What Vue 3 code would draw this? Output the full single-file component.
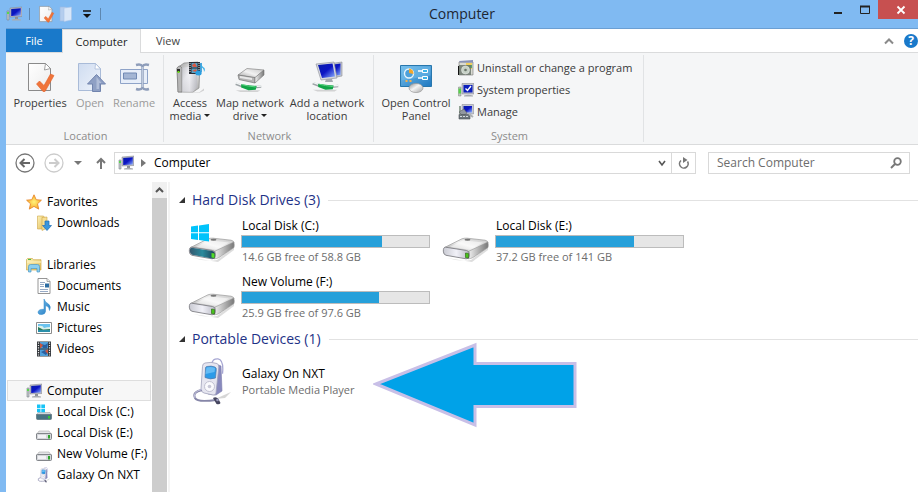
<template>
  <svg class="sprites" aria-hidden="true">
    <defs>
      <linearGradient id="g-screen" x1="0" y1="0" x2="1" y2="1">
        <stop offset="0" stop-color="#0a1ea8" />
        <stop offset="0.5" stop-color="#0b14c4" />
        <stop offset="1" stop-color="#8fb4ff" />
      </linearGradient>
      <linearGradient id="g-metal" x1="0" y1="0" x2="1" y2="1">
        <stop offset="0" stop-color="#8e8e8e" />
        <stop offset="0.45" stop-color="#f4f4f4" />
        <stop offset="1" stop-color="#a4a4a4" />
      </linearGradient>
      <linearGradient id="g-side" x1="0" y1="0" x2="1" y2="0">
        <stop offset="0" stop-color="#f2f2f2" />
        <stop offset="1" stop-color="#777" />
      </linearGradient>
      <linearGradient id="g-top" x1="0" y1="1" x2="1" y2="0">
        <stop offset="0" stop-color="#9c9c9c" />
        <stop offset="0.5" stop-color="#f2f2f2" />
        <stop offset="1" stop-color="#c4c4c4" />
      </linearGradient>
      <linearGradient id="g-face" x1="0" y1="0" x2="1" y2="0">
        <stop offset="0" stop-color="#c9cad2" />
        <stop offset="0.5" stop-color="#f1f1f8" />
        <stop offset="1" stop-color="#b9bac4" />
      </linearGradient>
      <linearGradient id="g-teal" x1="0" y1="0" x2="1" y2="0">
        <stop offset="0" stop-color="#34586e" />
        <stop offset="0.5" stop-color="#2a8a9c" />
        <stop offset="1" stop-color="#1f4258" />
      </linearGradient>
      <linearGradient id="g-folder" x1="0" y1="0" x2="1" y2="1">
        <stop offset="0" stop-color="#fdf3b8" />
        <stop offset="1" stop-color="#e2bb58" />
      </linearGradient>
      <linearGradient id="g-blue" x1="0" y1="0" x2="1" y2="1">
        <stop offset="0" stop-color="#7cc3ee" />
        <stop offset="1" stop-color="#1f78c0" />
      </linearGradient>
      <linearGradient id="g-page" x1="0" y1="0" x2="1" y2="1">
        <stop offset="0" stop-color="#ffffff" />
        <stop offset="1" stop-color="#ececec" />
      </linearGradient>
      <linearGradient id="g-fade" x1="0" y1="0" x2="1" y2="1">
        <stop offset="0" stop-color="#cfdcf0" />
        <stop offset="1" stop-color="#eef3fb" />
      </linearGradient>
      <radialGradient id="g-star">
        <stop offset="0" stop-color="#fff27a" />
        <stop offset="1" stop-color="#f8ae2c" />
      </radialGradient>
    </defs>

    <symbol id="computer" viewBox="0 0 16 16">
      <path d="M1 5h2v9H1z" fill="#c3c8cc" stroke="#7d858c" stroke-width=".6" />
      <path d="M1 6h2v2H1z" fill="#56d94b" />
      <path d="M4 2l12-1v9.500L4 11z" fill="#b8bbc4" stroke="#80828c" stroke-width=".5" />
      <path d="M5.200 3l9.600-.8v7.300L5.200 10z" fill="url(#g-screen)" />
      <path d="M9 11h3v2H9z" fill="#8a8f96" />
      <path d="M6 13.500q4.500-1.500 9 0v1H6z" fill="#a8acb0" />
    </symbol>

    <symbol id="page" viewBox="0 0 32 32">
      <path d="M4.500 2.500h17l5 5v22h-22z" fill="url(#g-page)" stroke="#8a8a8a" />
      <path d="M21.500 2.500l-1 6.500 6-1.500z" fill="#fff" stroke="#8a8a8a" stroke-width=".8" />
      <path d="M12.500 23l3-3 4.500 4.500L26.500 13l3.500 1.500L21 30.500h-2z" fill="#f0743a" stroke="#e05f28" stroke-width=".6" />
    </symbol>

    <symbol id="open" viewBox="0 0 32 32">
      <path d="M4.500 2.500h17l5 5v22h-22z" fill="url(#g-fade)" stroke="#a9bbd8" />
      <path d="M21.500 2.500l-.500 5.500h5.500z" fill="#fff" stroke="#a9bbd8" stroke-width=".8" />
      <path d="M22.500 13.500l9 9.500h-5v7.500h-8V23h-5z" fill="#8fa0c4" stroke="#7184ae" />
      <path d="M22.500 16l5 6h-2.500v6h-2.500z" fill="#b0bdd8" />
    </symbol>

    <symbol id="rename" viewBox="0 0 32 32">
      <path d="M2.500 8.500h27v14h-27z" fill="#e7eef9" stroke="#8ea3c8" />
      <path d="M5.500 12h13v6h-13z" fill="#a3b5d4" stroke="#7189b3" />
      <path d="M18 4q5-1.500 6.500 1.500Q26 2.500 31 4M24.500 5v22M18 28q5 1.500 6.500-1.500Q26 29.500 31 28" fill="none" stroke="#8e9dba" stroke-width="2.400" />
      <path d="M24.500 6v20" stroke="#bdc9de" stroke-width="1" />
    </symbol>

    <symbol id="media" viewBox="0 0 32 32">
      <path d="M3 31l22 .5 5-4v2l-5 2.500z" fill="#999" opacity=".4" />
      <path d="M3 7L10 2l14-1 2 2-1 24-6 4H4z" fill="url(#g-metal)" stroke="#888" stroke-width=".7" />
      <path d="M3 7q1-2 3-2l2 2v24H4z" fill="#b6b6b6" stroke="#737373" stroke-width=".6" />
      <path d="M8 7l15-3v22l-4 5H8z" fill="url(#g-face)" opacity=".6" />
      <path d="M3 8h3v3H3z" fill="#2e2e2e" />
      <path d="M3.500 10h2v2h-2z" fill="#6adf18" />
      <path d="M15 1h11v12H15z" fill="#292d34" />
      <path d="M17.500 2h6v4.500h-6zM17.500 7.500h6V12h-6z" fill="#58a2c5" />
      <path d="M18 4l3-2 2 4h-4zM18 10l4-2 1 3z" fill="#d95842" />
      <path d="M16 2v10M25 2v10" stroke="#ddd" stroke-dasharray="1 1" />
      <path d="M27 2v9" stroke="#138bd3" stroke-width="1.500" />
      <path d="M27 1q0 4 3.500 6 1 2-.5 4 0-4-3-5" fill="#36afe8" />
      <ellipse cx="24.500" cy="12" rx="3.200" ry="2.500" fill="#2b9ee0" />
    </symbol>

    <symbol id="cable" viewBox="0 0 32 12">
      <path d="M2 10h27l-3 2H7z" fill="#bbb" opacity=".6" />
      <path d="M2 3l8 3M20 7l10-1" stroke="#9da4a7" stroke-width="3" />
      <path d="M2 2l6 2.200M21 6l9-.5" stroke="#f1f5f5" stroke-width="1.500" />
      <path d="M8 3.500l8 1 9 1-1 4-8 .5-8-3z" fill="#11a447" />
      <path d="M9 4l7 1.500 8 1" stroke="#65e08b" />
    </symbol>

    <symbol id="mapdrive" viewBox="0 0 32 32">
      <path d="M4 14L13 7.500l17 1.500-9 8z" fill="url(#g-top)" stroke="#888" stroke-width=".7" />
      <path d="M4 14l17 2.500V22L5 18.500z" fill="#b5b5b5" stroke="#777" stroke-width=".7" />
      <path d="M6 15l12 2v2L6 17z" fill="#e8e8e8" />
      <path d="M21 16.500L30 9v5l-9 8z" fill="url(#g-side)" stroke="#777" stroke-width=".6" />
      <use href="#cable" x="0" y="20" width="29" height="11" />
    </symbol>

    <symbol id="addnet" viewBox="0 0 32 32">
      <path d="M17 3l14-2v14l-11 2z" fill="#c2c5ce" stroke="#8a8d97" stroke-width=".6" />
      <path d="M19 4l10.500-1.500V14L19 15z" fill="url(#g-screen)" />
      <path d="M5 3l18-2 3 16-16 2z" fill="#d5d7de" stroke="#8a8d97" stroke-width=".6" />
      <path d="M7 4l14.500-1.500L24 15.500 11 17z" fill="url(#g-screen)" />
      <path d="M15 18h6l1 3h-8z" fill="#a5a9b0" />
      <use href="#cable" x="0" y="19" width="29" height="12" />
    </symbol>

    <symbol id="panel" viewBox="0 0 32 32">
      <path d="M.5 4.500h31v21H.5z" fill="url(#g-blue)" stroke="#2877ad" />
      <path d="M1.500 5.500h29v9l-29 5z" fill="#72bdeb" opacity=".5" />
      <circle cx="9" cy="12.500" r="4.500" fill="#4da0da" stroke="#e6f3fb" stroke-width="1.400" />
      <path d="M9 12V7.500a5 5 0 0 1 4.500 5.500z" fill="#f6a72a" />
      <path d="M18 10h4M18 17h4" stroke="#fff" stroke-width="1.500" />
      <path d="M22.500 8.500h5v3h-5zM22.500 15.500h5v3h-5z" fill="#3bb3e9" stroke="#fff" />
      <path d="M5.500 20h2" stroke="#f8b048" stroke-width="2" />
      <path d="M9.500 20h2" stroke="#f8b048" stroke-width="2" />
      <ellipse cx="16" cy="27" rx="7" ry="4.600" fill="url(#g-metal)" stroke="#999" stroke-width=".7" />
    </symbol>

    <symbol id="uninstall" viewBox="0 0 16 16">
      <path d="M1 2h14v13H1z" fill="#d9dad2" stroke="#777" stroke-width=".6" />
      <path d="M1 1l14-1v2.500H2z" fill="#8992b8" />
      <path d="M8 3h6v6H8z" fill="#f0cf5d" />
      <path d="M9 5h5v3H9z" fill="#58a56b" />
      <path d="M1 5h12v10H1z" fill="#6c776d" opacity=".85" />
      <circle cx="7.500" cy="10" r="4" fill="#c6d1c6" stroke="#eee" stroke-width=".5" />
      <circle cx="7.500" cy="10" r="1.300" fill="#6a746a" />
      <path d="M.5 6v9" stroke="#111" />
    </symbol>

    <symbol id="sysprops" viewBox="0 0 16 16">
      <path d="M.5 5h2.500v9H.5z" fill="#bfc7bd" stroke="#7d857c" stroke-width=".5" />
      <path d="M.5 6.500h2.500v5H.5z" fill="#56d34a" />
      <path d="M4 1.500h12V12H4z" fill="#bfc1cb" stroke="#80828c" stroke-width=".5" />
      <path d="M5.500 3h9v7.500h-9z" fill="#0b1fbd" />
      <path d="M7.500 6.500l2 2L13 4" fill="none" stroke="#fff" stroke-width="1.400" />
      <path d="M6 13.500q4-1.500 9 0v1H6z" fill="#a8acb0" />
    </symbol>

    <symbol id="manage" viewBox="0 0 16 16">
      <path d="M1 2h2v8H1z" fill="#93a396" />
      <path d="M4 .5h11.500v9.500H4z" fill="#c5c8d2" stroke="#80828c" stroke-width=".5" />
      <path d="M5.500 2H14v6.500H5.500z" fill="url(#g-screen)" />
      <path d="M1 8l5-3 3 4-4 3z" fill="#9298a0" stroke="#555" stroke-width=".5" />
      <path d="M1 10.500h11v4.500H1z" fill="#6d757c" stroke="#4a5056" stroke-width=".6" />
      <path d="M2 12.500h9" stroke="#d7dcde" stroke-dasharray="2 1" />
      <path d="M11 10l4 3" stroke="#aeb2b5" stroke-width="2" />
    </symbol>

    <symbol id="star" viewBox="0 0 16 16">
      <path d="M8 .8l2.200 4.900 5.200.5-3.900 3.600 1.200 5.300L8 12.400l-4.700 2.700 1.200-5.300L.6 6.200l5.200-.5z" fill="url(#g-star)" stroke="#e8892e" stroke-width=".9" />
    </symbol>

    <symbol id="downloads" viewBox="0 0 16 16">
      <path d="M1.500 1h6l1 1.500V14h-7z" fill="url(#g-folder)" stroke="#cfa546" stroke-width=".6" />
      <path d="M6 2.500l5-.5v11l-5 2.500z" fill="#f7de92" stroke="#cfa546" stroke-width=".6" />
      <path d="M9 6h4v4.500h2.500L11 15.500 6.500 10.500H9z" fill="#3a96dc" stroke="#1f6db1" stroke-width=".7" />
    </symbol>

    <symbol id="libraries" viewBox="0 0 16 16">
      <path d="M.5 2.500l1-1h5l1 1.200H15V13H.5z" fill="url(#g-folder)" stroke="#cfac4f" stroke-width=".7" />
      <path d="M2 2.500h3" stroke="#4fbd48" />
      <path d="M1 5h14" stroke="#fff5c4" />
      <path d="M2.500 15V9.500q0-2 2-2h7q2 0 2 2V15H11v-3.500H5V15z" fill="#8ccff0" stroke="#4c98c5" stroke-width=".7" />
    </symbol>

    <symbol id="documents" viewBox="0 0 16 16">
      <path d="M2 .5h9l3 3v12H2z" fill="#fff" stroke="#8a8a8a" stroke-width=".9" />
      <path d="M11 .5v3h3" fill="#eee" stroke="#8a8a8a" stroke-width=".7" />
      <path d="M4 4.500h5M4 6.500h4M4 8.500h4M4 11.500h8M4 13.500h8" stroke="#8aa0c0" stroke-width=".9" />
      <path d="M9 5.500h4v4H9z" fill="#2d6da3" />
    </symbol>

    <symbol id="music" viewBox="0 0 16 16">
      <path d="M8 0q1 3.500 4.500 5 3 2.500 1 6.500 0-4-4-5v6.200q-.5 2.500-3.500 2.800Q2 15.800 2 13.200 2.500 10 8 10.300z" fill="url(#g-blue)" stroke="#2b86c8" stroke-width=".5" />
    </symbol>

    <symbol id="pictures" viewBox="0 0 16 16">
      <path d="M.5 2.500h15v11H.5z" fill="#fff" stroke="#8c8c8c" />
      <path d="M2 4h12v4H2z" fill="#6bc3ee" />
      <path d="M2 6q5-1 6 2 3-1 6-1v2H2z" fill="#d9f0ea" />
      <path d="M2 7l5 2.500 7-.5v1.500H2z" fill="#2c7a5a" />
      <path d="M2 10h12v2H2z" fill="#2a8fa9" />
    </symbol>

    <symbol id="videos" viewBox="0 0 16 16">
      <path d="M1 .5h14v15H1z" fill="#34383d" />
      <path d="M4 1h8v6.500H4zM4 8.500h8V15H4z" fill="#4f9fda" />
      <path d="M5 3l4 1 3-2-1 5H7zM5 11l4-2 3 2-2 3z" fill="#2a5fa0" />
      <path d="M4 2l3 2-2 3H4zM9 10l3-2v5z" fill="#c9573f" />
      <path d="M2.500 1.500v13M13.500 1.500v13" stroke="#e8e8e8" stroke-width="1.200" stroke-dasharray="1.200 1.200" />
    </symbol>

    <symbol id="disk" viewBox="0 0 16 16">
      <path d="M3 6h10l2.500 3.500H.5z" fill="#e4e5e8" stroke="#999" stroke-width=".5" />
      <path d="M.5 9q0-.5 1-.5h13q1 0 1 .5v4.500q0 1-1 1h-13q-1 0-1-1z" fill="#d4d6da" stroke="#777b80" stroke-width=".9" />
      <path d="M2 10h8v3H2z" fill="#f2f2f5" />
      <path d="M12 10h2v3.500h-2z" fill="#2da32b" />
    </symbol>

    <symbol id="sysdisk" viewBox="0 0 16 16">
      <path d="M2 8.500h12l1.500 2.500H.5z" fill="#d2d6da" stroke="#999" stroke-width=".5" />
      <path d="M.5 10.500h15v4q0 1-1 1h-13q-1 0-1-1z" fill="#497281" stroke="#627781" stroke-width=".8" />
      <path d="M12 12h2v2.500h-2z" fill="#34c832" />
      <path d="M1 .5h3.500V4H1zM5.300.500H9V4H5.300zM1 4.800h3.500v3.500H1zM5.300 4.800H9v3.500H5.300z" fill="#17c4f7" />
    </symbol>

    <symbol id="player" viewBox="0 0 48 48">
      <path d="M27 41l16-7-6 6z" fill="#bbb" opacity=".6" />
      <path d="M24 6Q24 .5 30 .8q6 1 4.500 15" fill="none" stroke="#a6a6d2" stroke-width="1.300" />
      <path d="M28 6l5 2 1 25-6 4-8-1z" fill="#8889bd" stroke="#7a7bab" stroke-width=".6" />
      <path d="M17 5q6-1.500 12 .5 2 1 1.800 3.500L28 35q0 2.500-3 2l-9-2q-3-1-3-4l1.500-22.500q0-3 2.500-3.500z" fill="#e6e6f0" stroke="#a0a1ba" stroke-width=".8" />
      <path d="M18.500 8.500q5-1 8.500 .5 1.500.7 1.300 2.500L27.500 20q-5 2-10.500-.5l.5-9.500q0-1 1-1.500z" fill="#2c9be8" stroke="#5479a8" stroke-width=".7" />
      <path d="M18.500 9.500q5-1 8.500 .5l-.5 4-9 2z" fill="#7cc9fa" opacity=".7" />
      <circle cx="21.500" cy="28.500" r="5" fill="#fafafd" stroke="#b5b5c8" stroke-width=".8" />
      <circle cx="21.500" cy="28.500" r="1.800" fill="#c7c7d6" />
      <path d="M14 32Q4 34 7 40q2 4.500 21 2" fill="none" stroke="#8686a8" stroke-width="2" />
      <path d="M14 31.500Q4.500 33.500 7 40" fill="none" stroke="#c4c4df" />
      <path d="M25 40q3-2 5.500 1l2 4q-1 2-4 1z" fill="#46465f" />
      <circle cx="29.500" cy="42" r="1.300" fill="#9c9cbc" />
    </symbol>

    <symbol id="drive" viewBox="0 0 48 48">
      <path d="M5 41q14 4 24 2l17-13v3L30 45z" fill="#777" opacity=".25" />
      <path d="M2.500 30.500L20 21.800q2-.8 5-.6l18 2q3 .6 3 2.600L28 35z" fill="url(#g-top)" stroke="#999" stroke-width=".7" />
      <path d="M8 30L21 23.200l20 2.200-13 7.300z" fill="#fff" opacity=".5" />
      <path d="M27 34.200l18.800-9.200q.8 2.500.2 5.500L31 40.500q-2 1.300-5 1.300z" fill="url(#g-side)" stroke="#999" stroke-width=".6" />
      <path d="M3.500 30.200l21 3.300q2.800.6 2.800 3.200v2.500q0 3-3.300 2.600L4 38.300q-2.700-.8-2.700-4.200 0-4 2.200-3.900z" fill="url(#g-face)" stroke="#808086" stroke-width=".9" />
      <ellipse cx="25.500" cy="22.700" rx="3" ry="1" fill="#777" />
      <path d="M23.500 36l3 .4v4.600l-3-.4z" fill="#46c41a" stroke="#28600f" stroke-width=".6" />
    </symbol>

    <symbol id="windrive" viewBox="0 0 48 48">
      <use href="#drive" width="48" height="48" />
      <path d="M3.800 30.700l20.500 3.200q2.500.6 2.500 2.800v2.500q0 2.600-2.800 2.200L4.200 37.800q-2.400-.7-2.400-3.700 0-3.500 2-3.400z" fill="url(#g-teal)" />
      <path d="M23.500 36l3 .4v4.600l-3-.4z" fill="#53dc26" />
      <path d="M3 9.500l7-1v6.800H3zM11 8.400l10-1.400v8.300H11zM3 16.200h7V23l-7-1zM11 16.200h10v8.300l-10-1.400z" fill="#00c3fb" />
    </symbol>
  </svg>

  <div class="window">
    <header class="titlebar">
      <div class="quick">
        <svg class="ic16"><use href="#computer" /></svg>
        <span class="bar"></span>
        <button aria-label="Properties"><svg class="ic18"><use href="#page" /></svg></button>
        <button aria-label="New folder">
          <svg class="ic16" viewBox="0 0 16 16">
            <path d="M2 1h6v14H2z" fill="#b4cdee" stroke="#9ab8e0" stroke-width=".6" />
            <path d="M6 2l7.500-1v13L6 15.500z" fill="#d8e6f8" stroke="#a9c4e8" stroke-width=".6" />
          </svg>
        </button>
        <button class="more" aria-label="Customize toolbar">
          <svg class="ic8" viewBox="0 0 8 8"><path d="M0 1h8" stroke="#111" stroke-width="1.500" /><path d="M0 4h8L4 8z" fill="#111" /></svg>
        </button>
        <span class="bar"></span>
      </div>
      <h1>Computer</h1>
      <div class="controls">
        <button aria-label="Minimize"><svg width="10" height="10"><path d="M1 8h8" stroke="#222" stroke-width="2" /></svg></button>
        <button aria-label="Maximize"><svg width="10" height="10"><path d="M.5 1.500h9v7h-9z" fill="none" stroke="#222" /><path d="M0 1.500h10" stroke="#222" stroke-width="2" /></svg></button>
        <button class="close" aria-label="Close"><svg width="10" height="10"><path d="M1.500 1.500l7 7M8.500 1.500l-7 7" stroke="#fff" stroke-width="1.800" /></svg></button>
      </div>
    </header>

    <nav class="tabs">
      <button class="file">File</button>
      <button class="active">Computer</button>
      <button>View</button>
      <div class="tab-right">
        <button aria-label="Collapse ribbon"><svg width="10" height="8"><path d="M1 6.500L5 2.500l4 4" fill="none" stroke="#8a8a8a" stroke-width="2" /></svg></button>
        <button class="help" aria-label="Help">?</button>
      </div>
    </nav>

    <section class="ribbon">
      <div v-for="group in groups" :key="group.name" class="group" :class="group.name.toLowerCase()">
        <div class="tools">
          <button v-for="tool in group.tools" :key="tool.icon" class="tool" :class="[tool.icon, { off: tool.off }]" :disabled="tool.off">
            <svg class="ic32"><use :href="'#' + tool.icon" /></svg>
            <span v-for="line in tool.lines" :key="line">{{ line }}<i v-if="tool.menu && line === tool.lines[1]" class="caret"></i></span>
          </button>
          <div v-if="group.links" class="links">
            <button v-for="link in group.links" :key="link.icon">
              <svg class="ic16"><use :href="'#' + link.icon" /></svg>{{ link.text }}
            </button>
          </div>
        </div>
        <div class="group-name">{{ group.name }}</div>
      </div>
    </section>

    <div class="address">
      <button class="round" aria-label="Back"><svg width="20" height="20"><circle cx="10" cy="10" r="9" fill="#fff" stroke="#777" stroke-width="1.300" /><path d="M15 10H6M9.500 6L5.500 10l4 4" fill="none" stroke="#666" stroke-width="2" /></svg></button>
      <button class="round" aria-label="Forward"><svg width="20" height="20"><circle cx="10" cy="10" r="9" fill="#fff" stroke="#ccc" stroke-width="1.300" /><path d="M5 10h9M10.500 6l4 4-4 4" fill="none" stroke="#ccc" stroke-width="2" /></svg></button>
      <button class="recent" aria-label="Recent locations"><svg width="8" height="4"><path d="M0 0h8L4 4z" fill="#777" /></svg></button>
      <button class="up" aria-label="Up"><svg width="10" height="12"><path d="M5 12V2M1 6l4-4 4 4" fill="none" stroke="#777" stroke-width="2" /></svg></button>
      <div class="path">
        <svg class="ic16"><use href="#computer" /></svg>
        <svg class="sep" width="5" height="8"><path d="M0 0l5 4-5 4z" fill="#777" /></svg>
        <button class="crumb">Computer</button>
        <button class="drop" aria-label="Previous locations"><svg width="8" height="8"><path d="M1 2l3 4 3-4" fill="none" stroke="#555" stroke-width="1.600" /></svg></button>
        <button class="refresh" aria-label="Refresh"><svg width="12" height="12"><path d="M3 3.500a4.300 4.300 0 1 0 6.500 1" fill="none" stroke="#777" stroke-width="1.600" /><path d="M5 0l4.500 3L5 6z" fill="#777" /></svg></button>
      </div>
      <label class="search">
        <input type="text" aria-label="Search Computer" placeholder="Search Computer">
        <svg width="12" height="12"><circle cx="7.500" cy="4.500" r="3.300" fill="none" stroke="#777" stroke-width="1.800" /><path d="M5 7l-4 4" stroke="#777" stroke-width="2" /></svg>
      </label>
    </div>

    <div class="body">
      <nav class="tree">
        <div v-for="section in tree" :key="section.text" class="branch">
          <a href="#" class="root" :class="{ selected: section.selected }"><svg class="ic16"><use :href="'#' + section.icon" /></svg>{{ section.text }}</a>
          <a v-for="item in section.items" :key="item.text" href="#"><svg class="ic16"><use :href="'#' + item.icon" /></svg>{{ item.text }}</a>
        </div>
      </nav>
      <div class="scroll">
        <button aria-label="Scroll up"><svg width="9" height="6"><path d="M1 5l3.500-3.500L8 5" fill="none" stroke="#555" stroke-width="2" /></svg></button>
        <div class="thumb"></div>
      </div>

      <main class="files">
        <h2><i class="fold"></i>Hard Disk Drives (3)</h2>
        <div class="grid">
          <article v-for="d in drives" :key="d.name" class="entry">
            <svg class="ic48"><use :href="'#' + d.icon" /></svg>
            <div class="info">
              <p>{{ d.name }}</p>
              <div class="meter"><div :style="{ width: d.used + '%' }"></div></div>
              <p class="dim">{{ d.free }}</p>
            </div>
          </article>
        </div>
        <h2><i class="fold"></i>Portable Devices (1)</h2>
        <div class="grid devices">
          <article class="entry">
            <svg class="ic48"><use href="#player" /></svg>
            <div class="info">
              <p>Galaxy On NXT</p>
              <p class="dim">Portable Media Player</p>
            </div>
          </article>
        </div>
        <svg class="arrow" width="204" height="86" viewBox="0 0 204 86">
          <path d="M3 42L102 3v18.500h100v43H102V83z" fill="#00a2e8" stroke="#c8bfe7" stroke-width="3" />
        </svg>
      </main>
    </div>
  </div>
</template>

<script setup>
import { ref } from "vue";

const groups = ref([
  {
    name: "Location",
    tools: [
      { icon: "page", lines: ["Properties"] },
      { icon: "open", lines: ["Open"], off: true },
      { icon: "rename", lines: ["Rename"], off: true },
    ],
  },
  {
    name: "Network",
    tools: [
      { icon: "media", lines: ["Access", "media"], menu: true },
      { icon: "mapdrive", lines: ["Map network", "drive"], menu: true },
      { icon: "addnet", lines: ["Add a network", "location"] },
    ],
  },
  {
    name: "System",
    tools: [{ icon: "panel", lines: ["Open Control", "Panel"] }],
    links: [
      { icon: "uninstall", text: "Uninstall or change a program" },
      { icon: "sysprops", text: "System properties" },
      { icon: "manage", text: "Manage" },
    ],
  },
]);

const tree = ref([
  { text: "Favorites", icon: "star", items: [{ text: "Downloads", icon: "downloads" }] },
  {
    text: "Libraries",
    icon: "libraries",
    items: [
      { text: "Documents", icon: "documents" },
      { text: "Music", icon: "music" },
      { text: "Pictures", icon: "pictures" },
      { text: "Videos", icon: "videos" },
    ],
  },
  {
    text: "Computer",
    icon: "computer",
    selected: true,
    items: [
      { text: "Local Disk (C:)", icon: "sysdisk" },
      { text: "Local Disk (E:)", icon: "disk" },
      { text: "New Volume (F:)", icon: "disk" },
      { text: "Galaxy On NXT", icon: "player" },
    ],
  },
]);

const drives = ref([
  { name: "Local Disk (C:)", free: "14.6 GB free of 58.8 GB", used: 75, icon: "windrive" },
  { name: "Local Disk (E:)", free: "37.2 GB free of 141 GB", used: 74, icon: "drive" },
  { name: "New Volume (F:)", free: "25.9 GB free of 97.6 GB", used: 73, icon: "drive" },
]);
</script>

<style>
body {
  background: #fff;
  overflow: hidden;
}
</style>

<style scoped>
* {
  box-sizing: border-box;
}

.sprites {
  position: absolute;
  width: 0;
  height: 0;
}

.window {
  display: flex;
  flex-direction: column;
  height: 100vh;
  border-left: 6px solid #80baf2;
  font: 12px/16px "Open Sans", "Noto Sans", sans-serif;
  color: #000;
  background: #fff;
}

button {
  border: 0;
  padding: 0;
  background: none;
  font: inherit;
  color: inherit;
}

svg {
  display: block;
  flex: none;
}

.ic8 { width: 8px; height: 8px; }
.ic16 { width: 16px; height: 16px; }
.ic18 { width: 18px; height: 18px; }
.ic32 { width: 32px; height: 32px; }
.ic48 { width: 48px; height: 48px; }

/* title bar */
.titlebar {
  display: grid;
  grid-template-columns: 1fr auto 1fr;
  height: 29px;
  flex: none;
  background: #80baf2;
  border-bottom: 1px solid #6b9fd3;
}

.quick {
  display: flex;
  align-items: center;
  gap: 7px;
}

.quick button + button {
  margin-left: -4px;
}

.quick .more + .bar,
.quick .more {
  margin-left: 2px !important;
}

.bar {
  width: 1px;
  height: 12px;
  background: #5d87b0;
}

.titlebar h1 {
  margin: 0;
  font-size: 14px;
  font-weight: 400;
  line-height: 28px;
  color: #1d2733;
}

.controls {
  display: flex;
  justify-content: flex-end;
}

.controls button {
  display: flex;
  align-items: center;
  justify-content: center;
  width: 27px;
  height: 19px;
}

.controls .close {
  width: 40px;
  background: #c75050;
}

.controls .close svg {
  margin-left: 6px;
}

/* tabs */
.tabs {
  display: flex;
  height: 24px;
  flex: none;
  border-bottom: 1px solid #dadbdc;
  font-size: 11px;
  color: #444;
}

.tabs > button {
  width: 54px;
}

.tabs .file {
  width: 56px;
  height: 23px;
  background: #1979ca;
  color: #fff;
}

.tabs .active {
  width: 79px;
  height: 24px;
  border: 1px solid #dadbdc;
  border-bottom: 0;
  background: #f5f6f7;
  color: #222;
}

.tab-right {
  display: flex;
  align-items: center;
  gap: 10px;
  margin-left: auto;
}

.help {
  width: 14px;
  height: 14px;
  border-radius: 7px;
  background: #1979ca;
  color: #fff;
  font-size: 12px;
  font-weight: 700;
  line-height: 14px;
}

/* ribbon */
.ribbon {
  display: flex;
  height: 92px;
  flex: none;
  padding: 2px 0;
  background: #f5f6f7;
  border-bottom: 1px solid #dadbdc;
  font-size: 11px;
  color: #3a3a3a;
}

.group {
  display: flex;
  flex-direction: column;
  justify-content: space-between;
  padding-left: 2px;
  border-right: 1px solid #e1e3e5;
}

.location { width: 158px; }
.network { width: 210px; }
.system { width: 270px; }

.tools {
  display: flex;
}

.tool {
  display: flex;
  flex-direction: column;
  align-items: center;
  padding-top: 6px;
  line-height: 13px;
  white-space: nowrap;
}

.tool svg {
  margin-bottom: 3px;
}

.tool.page { width: 64px; }
.tool.open { width: 36px; }
.tool.rename { width: 52px; }
.tool.media { width: 48px; }
.tool.mapdrive { width: 72px; }
.tool.addnet { width: 82px; }
.tool.panel { width: 80px; }

.tool.off {
  color: #9a9a9a;
}

.caret {
  display: inline-block;
  margin-left: 3px;
  border: 3px solid transparent;
  border-top-color: #222;
  border-bottom: 0;
  vertical-align: 3px;
}

.links {
  padding: 2px 0 0 2px;
}

.links button {
  display: flex;
  align-items: center;
  gap: 3px;
  height: 22px;
  white-space: nowrap;
}

.group-name {
  text-align: center;
  line-height: 12px;
  color: #8c8c8c;
}

/* address row */
.address {
  display: flex;
  align-items: center;
  flex: none;
  height: 36px;
  padding: 0 8px 0 9px;
}

.round {
  margin-right: 9px;
}

.recent {
  margin: 0 14px 0 1px;
}

.path {
  display: flex;
  align-items: center;
  flex: 1;
  height: 22px;
  margin: 0 12px 0 8px;
  padding-left: 3px;
  border: 1px solid #d9d9d9;
}

.sep {
  margin: 0 8px 0 7px;
}

.drop {
  margin-left: auto;
  padding: 0 5px;
}

.refresh {
  display: flex;
  align-items: center;
  justify-content: center;
  width: 24px;
  height: 20px;
  border-left: 1px solid #d9d9d9;
}

.search {
  display: flex;
  align-items: center;
  width: 202px;
  height: 22px;
  padding: 0 7px 0 8px;
  border: 1px solid #d9d9d9;
}

.search input {
  flex: 1;
  min-width: 0;
  padding: 0;
  border: 0;
  outline: 0;
  background: none;
  font: inherit;
}

.search input::placeholder {
  color: #6d6d6d;
}

/* navigation pane */
.body {
  display: flex;
  flex: 1;
  min-height: 0;
  padding-top: 1px;
}

.tree {
  width: 146px;
  padding: 9px 1px 0;
  overflow: hidden;
}

.branch {
  margin-bottom: 21px;
}

.tree a {
  display: flex;
  align-items: center;
  gap: 5px;
  height: 21px;
  padding-left: 28px;
  border: 1px solid transparent;
  color: #000;
  text-decoration: none;
  white-space: nowrap;
}

.tree .root {
  padding-left: 18px;
}

.tree .selected {
  background: #f7f7f7;
  border-color: #dedede;
}

.scroll {
  display: flex;
  flex-direction: column;
  width: 18px;
  border-right: 2px solid #f3f3f3;
}

.scroll button {
  display: flex;
  align-items: center;
  justify-content: center;
  width: 15px;
  height: 16px;
  background: #f0f0f0;
}

.thumb {
  flex: 1;
  width: 15px;
  background: #cdcdcd;
}

/* file area */
.files {
  position: relative;
  flex: 1;
  padding: 7px 0 0 18px;
}

h2 {
  display: flex;
  align-items: center;
  margin: 0 0 6px -9px;
  font-size: 14px;
  font-weight: 400;
  line-height: 22px;
  color: #1e3287;
}

h2::after {
  content: "";
  flex: 1;
  height: 1px;
  margin-left: 8px;
  background: #e2e2e2;
}

.fold {
  margin-right: 7px;
  border: 3px solid #333;
  border-top-color: transparent;
  border-left-color: transparent;
}

.grid {
  display: grid;
  grid-template-columns: repeat(auto-fill, 254px);
  row-gap: 8px;
  margin-bottom: 7px;
}

.devices {
  padding-top: 2px;
}

.entry {
  display: flex;
  align-items: center;
  gap: 5px;
  height: 48px;
}

.info {
  width: 189px;
}

.info p {
  margin: 0;
  padding-left: 1px;
}

.info .dim {
  font-size: 11px;
  color: #6d6d6d;
}

.meter {
  height: 13px;
  margin: 1px 0;
  border: 1px solid #bcbcbc;
  background: #e6e6e6;
}

.meter div {
  height: 100%;
  background: #26a0da;
}

/* callout drawn over the list */
.arrow {
  position: absolute;
  left: 203px;
  top: 160px;
}
</style>
